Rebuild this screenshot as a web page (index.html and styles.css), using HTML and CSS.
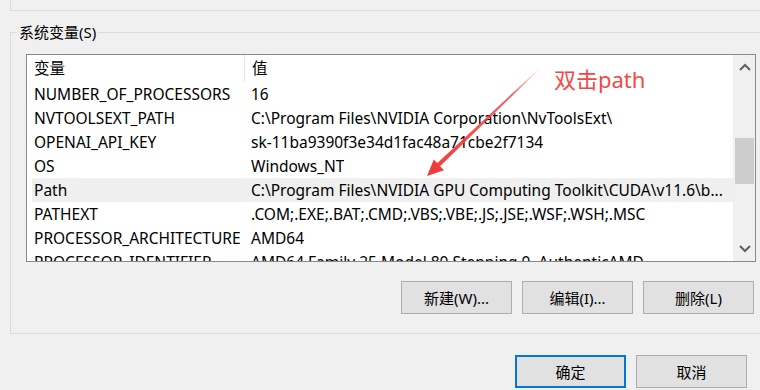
FILE: index.html
```html
<!DOCTYPE html>
<html lang="zh-CN">
<head>
    <meta charset="UTF-8">
    <meta name="viewport" content="width=device-width, initial-scale=1.0">
    <title>环境变量</title>
    <link rel="stylesheet" href="styles.css">
</head>
<body>
    <div class="prev-group"></div>

    <fieldset class="group">
        <legend>系统变量(S)</legend>

        <div class="listview">
            <div class="list-main">
                <div class="list-header">
                    <div class="col-name">变量</div>
                    <div class="col-value">值</div>
                </div>
                <div class="row">
                    <div class="col-name">NUMBER_OF_PROCESSORS</div>
                    <div class="col-value">16</div>
                </div>
                <div class="row">
                    <div class="col-name">NVTOOLSEXT_PATH</div>
                    <div class="col-value">C:\Program Files\NVIDIA Corporation\NvToolsExt\</div>
                </div>
                <div class="row">
                    <div class="col-name">OPENAI_API_KEY</div>
                    <div class="col-value">sk-11ba9390f3e34d1fac48a71cbe2f7134</div>
                </div>
                <div class="row">
                    <div class="col-name">OS</div>
                    <div class="col-value">Windows_NT</div>
                </div>
                <div class="row selected">
                    <div class="col-name">Path</div>
                    <div class="col-value">C:\Program Files\NVIDIA GPU Computing Toolkit\CUDA\v11.6\b...</div>
                </div>
                <div class="row">
                    <div class="col-name">PATHEXT</div>
                    <div class="col-value">.COM;.EXE;.BAT;.CMD;.VBS;.VBE;.JS;.JSE;.WSF;.WSH;.MSC</div>
                </div>
                <div class="row">
                    <div class="col-name">PROCESSOR_ARCHITECTURE</div>
                    <div class="col-value">AMD64</div>
                </div>
                <div class="row">
                    <div class="col-name">PROCESSOR_IDENTIFIER</div>
                    <div class="col-value">AMD64 Family 25 Model 80 Stepping 0, AuthenticAMD</div>
                </div>
            </div>
            <div class="scrollbar">
                <div class="scroll-btn">
                    <svg width="12" height="8" viewBox="0 0 12 8"><path d="M1 7 L6 2 L11 7" fill="none" stroke="#606060" stroke-width="2"/></svg>
                </div>
                <div class="scroll-track">
                    <div class="scroll-thumb"></div>
                </div>
                <div class="scroll-btn">
                    <svg width="12" height="8" viewBox="0 0 12 8"><path d="M1 1 L6 6 L11 1" fill="none" stroke="#606060" stroke-width="2"/></svg>
                </div>
            </div>
        </div>

        <div class="group-actions">
            <button class="btn">新建(W)...</button>
            <button class="btn">编辑(I)...</button>
            <button class="btn">删除(L)</button>
        </div>
    </fieldset>

    <div class="dialog-actions">
        <button class="btn default">确定</button>
        <button class="btn">取消</button>
    </div>

    <!-- red annotation drawn over the screenshot -->
    <div class="note">双击path</div>
    <svg class="arrow" width="760" height="390" viewBox="0 0 760 390">
        <defs>
            <linearGradient id="fade" x1="540" y1="68" x2="427" y2="176" gradientUnits="userSpaceOnUse">
                <stop offset="0" stop-color="#f03c3c" stop-opacity="0"/>
                <stop offset="0.25" stop-color="#f03c3c" stop-opacity="0.8"/>
                <stop offset="1" stop-color="#f03c3c"/>
            </linearGradient>
        </defs>
        <polygon points="540,67.5 540.6,68.3 439.8,166.4 436.9,163.4" fill="url(#fade)"/>
        <polygon points="427,176 433.8,159.6 444,170.2" fill="#f03c3c"/>
    </svg>
</body>
</html>
```

FILE: styles.css
```css
body {
    margin: 0;
    width: 760px;
    height: 390px;
    overflow: hidden;
    position: relative;
    background-color: #f0f0f0;
    color: #000;
    font-family: "Noto Sans", "Noto Sans CJK SC", sans-serif;
    font-size: 15px;
}

.prev-group {
    height: 10px;
    margin-left: 10px;
    border-left: 1px solid #dcdcdc;
    border-bottom: 1px solid #dcdcdc;
}

.group {
    margin: 11px -40px 0 10px;
    padding: 0 0 19px 0;
    border: 1px solid #dcdcdc;
    min-width: 0;
}

.group legend {
    margin-left: 6px;
    padding: 0 2px;
    line-height: 20px;
    height: 20px;
}

.listview {
    display: flex;
    width: 728px;
    height: 206px;
    margin: 12px 0 0 15px;
    border: 1px solid #8a8a8a;
    background-color: #fff;
    overflow: hidden;
    font-size: 15.5px;
}

.list-main {
    flex: 1;
    overflow: hidden;
    border-right: 1px solid #f0f0f0;
}

.list-header {
    display: flex;
    height: 27px;
    line-height: 27px;
}

.list-header .col-name {
    width: 210px;
    padding-left: 7px;
    border-right: 1px solid #e5e5e5;
}

.list-header .col-value {
    padding-left: 7px;
}

.row {
    display: flex;
    height: 24px;
    line-height: 24px;
    margin-left: 5px;
    white-space: nowrap;
}

.row.selected {
    background-color: #efefef;
}

.row .col-name {
    width: 210px;
    flex: none;
    padding-left: 2px;
}

.row .col-value {
    padding-left: 7px;
    overflow: hidden;
}

.scrollbar {
    width: 21px;
    display: flex;
    flex-direction: column;
    background-color: #f0f0f0;
}

.scroll-btn {
    height: 24px;
    display: flex;
    align-items: center;
    justify-content: center;
}

.scroll-track {
    flex: 1;
}

.scroll-thumb {
    margin: 59px 1px 0 1px;
    height: 46px;
    background-color: #cdcdcd;
}

.group-actions {
    display: flex;
    justify-content: flex-end;
    gap: 10px;
    width: 730px;
    margin: 19px 0 0 15px;
    padding-right: 2px;
    box-sizing: border-box;
}

.btn {
    width: 111px;
    height: 33px;
    padding: 0;
    background-color: #e1e1e1;
    border: 1px solid #adadad;
    font-family: inherit;
    font-size: 15px;
    color: #000;
}

.dialog-actions {
    display: flex;
    justify-content: flex-end;
    gap: 10px;
    margin-top: 21px;
    padding-right: 13px;
}

.btn.default {
    border: 2px solid #0078d7;
}

.note {
    position: absolute;
    left: 554px;
    top: 65px;
    font-size: 22px;
    color: #f24848;
    line-height: 28px;
}

.arrow {
    position: absolute;
    left: 0;
    top: 0;
    pointer-events: none;
}
```
